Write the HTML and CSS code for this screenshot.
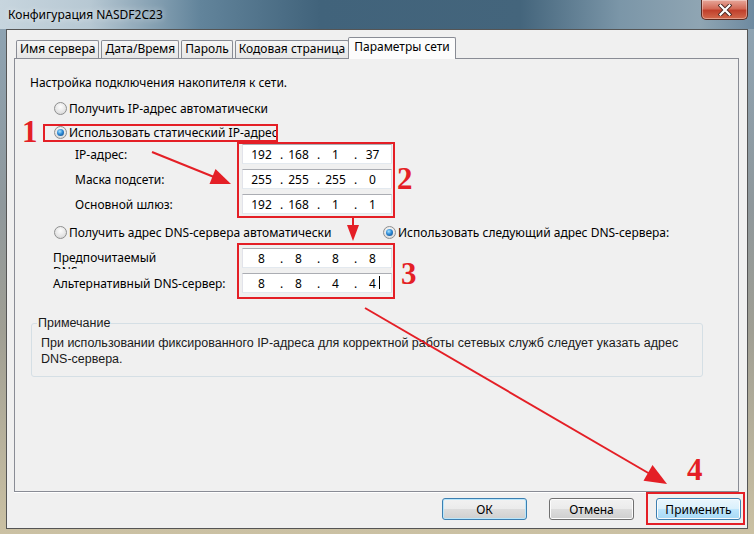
FILE: index.html
```html
<!DOCTYPE html>
<html lang="ru">
<head>
    <meta charset="UTF-8">
    <title>Конфигурация NASDF2C23</title>
    <link rel="stylesheet" href="styles.css">
</head>
<body>
    <div class="window">
        <div class="titlebar">
            <span class="title">Конфигурация NASDF2C23</span>
            <div class="close-btn">
                <svg width="14" height="12" viewBox="0 0 14 12">
                    <path d="M2.5 1.5 L11.5 10.5 M11.5 1.5 L2.5 10.5" stroke="#4a2a24" stroke-width="4" stroke-linecap="square"/>
                    <path d="M2.5 1.5 L11.5 10.5 M11.5 1.5 L2.5 10.5" stroke="#fff" stroke-width="2.2" stroke-linecap="square"/>
                </svg>
            </div>
        </div>
        <div class="frame">
            <div class="client">
                <div class="tabs">
                    <div class="tab">Имя сервера</div>
                    <div class="tab">Дата/Время</div>
                    <div class="tab">Пароль</div>
                    <div class="tab">Кодовая страница</div>
                    <div class="tab active">Параметры сети</div>
                </div>
                <div class="panel">
                    <p class="intro">Настройка подключения накопителя к сети.</p>

                    <div class="option first"><span class="radio"></span>Получить IP-адрес автоматически</div>
                    <div class="option second"><span class="radio checked"></span>Использовать статический IP-адрес</div>

                    <div class="addr-group ip-group">
                        <div class="addr-row">
                            <span class="addr-label">IP-адрес:</span>
                            <div class="ipbox">
                                <span class="oct">192</span><span class="dot">.</span><span class="oct">168</span><span class="dot">.</span><span class="oct">1</span><span class="dot">.</span><span class="oct">37</span>
                            </div>
                        </div>
                        <div class="addr-row">
                            <span class="addr-label">Маска подсети:</span>
                            <div class="ipbox">
                                <span class="oct">255</span><span class="dot">.</span><span class="oct">255</span><span class="dot">.</span><span class="oct">255</span><span class="dot">.</span><span class="oct">0</span>
                            </div>
                        </div>
                        <div class="addr-row">
                            <span class="addr-label">Основной шлюз:</span>
                            <div class="ipbox">
                                <span class="oct">192</span><span class="dot">.</span><span class="oct">168</span><span class="dot">.</span><span class="oct">1</span><span class="dot">.</span><span class="oct">1</span>
                            </div>
                        </div>
                    </div>

                    <div class="dns-choice">
                        <div class="option auto-dns"><span class="radio"></span>Получить адрес DNS-сервера автоматически</div>
                        <div class="option"><span class="radio checked"></span>Использовать следующий адрес DNS-сервера:</div>
                    </div>

                    <div class="addr-group dns-group">
                        <div class="addr-row">
                            <span class="addr-label clipped">Предпочитаемый DNS-сервер:</span>
                            <div class="ipbox">
                                <span class="oct">8</span><span class="dot">.</span><span class="oct">8</span><span class="dot">.</span><span class="oct">8</span><span class="dot">.</span><span class="oct">8</span>
                            </div>
                        </div>
                        <div class="addr-row">
                            <span class="addr-label">Альтернативный DNS-сервер:</span>
                            <div class="ipbox">
                                <span class="oct">8</span><span class="dot">.</span><span class="oct">8</span><span class="dot">.</span><span class="oct">4</span><span class="dot">.</span><span class="oct"><span class="caret">4</span></span>
                            </div>
                        </div>
                    </div>

                    <fieldset class="note">
                        <legend>Примечание</legend>
                        <p>При использовании фиксированного IP-адреса для корректной работы сетевых служб следует указать адрес<br>DNS-сервера.</p>
                    </fieldset>
                </div>
                <div class="buttons">
                    <button class="btn default">ОК</button>
                    <button class="btn">Отмена</button>
                    <button class="btn hot">Применить</button>
                </div>
            </div>
        </div>

        <!-- red marks drawn over the screenshot -->
        <svg class="marks" width="754" height="534" viewBox="0 0 754 534">
            <g fill="none" stroke="#e41f26" stroke-width="2">
                <rect x="44" y="125" width="233" height="16"/>
                <rect x="238" y="143" width="156" height="74"/>
                <rect x="238" y="244" width="156" height="54"/>
                <rect x="647" y="493" width="97" height="31"/>
                <line x1="152" y1="152" x2="214" y2="177"/>
                <line x1="353" y1="218" x2="353" y2="227"/>
                <line x1="365" y1="308" x2="650" y2="474"/>
            </g>
            <g fill="#e41f26">
                <polygon points="231,184 209.5,183.9 215.5,169.1"/>
                <polygon points="347,225 359,225 353,241"/>
                <polygon points="667,484 643.5,480.7 652.5,465.1"/>
            </g>
            <g class="num" fill="#e41f26">
                <text x="22" y="142">1</text>
                <text x="397" y="189">2</text>
                <text x="401" y="284">3</text>
                <text x="687" y="480">4</text>
            </g>
        </svg>
    </div>
</body>
</html>
```

FILE: styles.css
```css
* {
    box-sizing: border-box;
}
body {
    margin: 0;
    font-family: "Noto Sans", sans-serif;
    font-size: 12px;
    color: #000;
}
.window {
    position: relative;
    width: 754px;
    height: 534px;
    display: flex;
    flex-direction: column;
}
.titlebar {
    height: 29px;
    flex: none;
    display: flex;
    align-items: center;
    padding: 0 6px 0 8px;
    background: linear-gradient(to right, #c7d5de 0, #b7c8d3 90px, #62849b 200px, #41637b 320px, #44657c 520px, #7b96a8 620px, #8fa5b3 700px, #6e8aa0 754px);
}
.title {
    text-shadow: 0 0 6px rgba(255, 255, 255, 0.8);
}
.close-btn {
    margin-left: auto;
    align-self: flex-start;
    width: 47px;
    height: 20px;
    display: flex;
    align-items: center;
    justify-content: center;
    border: 1px solid #5a2b22;
    border-top: none;
    border-radius: 0 0 5px 5px;
    background: linear-gradient(#e7a79a, #d36b58 45%, #c0402c 55%, #d26a4d);
    box-shadow: inset 0 0 0 1px rgba(255, 255, 255, 0.35);
}
.frame {
    flex: 1;
    display: flex;
    padding: 0 6px 5px 6px;
    background: linear-gradient(#8ea3b2 0, #8f989c 35%, #a09f94 60%, #cbc1a3 100%);
}
.client {
    flex: 1;
    display: flex;
    flex-direction: column;
    border: 1px solid #555;
    background: #f0f0f0;
    padding: 7px 6px 0 7px;
}
.tabs {
    display: flex;
    align-items: flex-end;
    padding-left: 2px;
    height: 21px;
    flex: none;
}
.tab {
    height: 18px;
    line-height: 16px;
    padding: 0 3px;
    margin-right: 2px;
    border: 1px solid #898c95;
    border-bottom: none;
    border-radius: 2px 2px 0 0;
    background: linear-gradient(#f6f6f6, #e6e6e6);
    white-space: nowrap;
}
.tab.active {
    height: 22px;
    margin-left: -3px;
    margin-bottom: -1px;
    line-height: 18px;
    padding: 0 5px;
    background: #fcfcfc;
    position: relative;
    z-index: 1;
}
.panel {
    flex: 1;
    margin-right: 2px;
    border: 1px solid #898c95;
    background: #f0f0f0;
    box-shadow: 0 1px 0 #fff;
}
.intro {
    margin: 16px 0 0 15px;
    line-height: 16px;
}
.option {
    display: flex;
    align-items: center;
    height: 16px;
    white-space: nowrap;
}
.option.first {
    margin: 9px 0 0 39px;
}
.option.second {
    margin: 8px 0 0 39px;
}
.radio {
    position: relative;
    flex: none;
    width: 13px;
    height: 13px;
    margin-right: 2px;
    border-radius: 50%;
    border: 1px solid #8e8f8f;
    background: radial-gradient(circle at 50% 35%, #fdfdfd, #e4e4e4 60%, #cfcfcf);
}
.radio.checked::after {
    content: "";
    position: absolute;
    left: 2px;
    top: 2px;
    width: 7px;
    height: 7px;
    border-radius: 50%;
    background: radial-gradient(circle at 40% 35%, #a8e4ff, #2d8ad6 45%, #0c3f78);
}
.addr-group.ip-group {
    margin-top: 4px;
}
.addr-group.dns-group {
    margin-top: 8px;
}
.addr-row {
    display: flex;
    align-items: center;
    height: 20px;
}
.addr-row + .addr-row {
    margin-top: 5px;
}
.ip-group .addr-label {
    margin-left: 60px;
    width: 167px;
}
.dns-group .addr-label {
    margin-left: 38px;
    width: 189px;
}
.addr-label.clipped {
    align-self: flex-start;
    height: 21px;
    line-height: 14px;
    padding: 3px 80px 0 0;
    overflow: hidden;
    white-space: normal;
}
.ipbox {
    width: 150px;
    height: 20px;
    display: flex;
    align-items: center;
    background: #fff;
    border: 1px solid;
    border-color: #abadb3 #dbdfe6 #e3e9ef #e2e3ea;
}
.oct {
    flex: 1;
    text-align: center;
}
.dot {
    width: 0;
    white-space: nowrap;
}
.caret {
    position: relative;
}
.caret::after {
    content: "";
    position: absolute;
    left: calc(100% + 3px);
    top: 1px;
    width: 1px;
    height: 13px;
    background: #000;
}
.dns-choice {
    display: flex;
    margin: 10px 0 0 39px;
}
.auto-dns {
    width: 329px;
}
.note {
    margin: 23px 0 0 16px;
    width: 672px;
    padding: 5px 9px 9px 9px;
    border: 1px solid #d5dfe5;
    border-radius: 3px;
    font-family: "Liberation Sans", sans-serif;
    font-size: 12.5px;
    color: #1a1a1a;
}
.note legend {
    margin-left: -4px;
    padding: 0 1px;
    line-height: 14px;
}
.note p {
    margin: 0;
    line-height: 16px;
}
.buttons {
    display: flex;
    justify-content: flex-end;
    gap: 22px;
    margin: 6px 0 8px 0;
    height: 22px;
    flex: none;
}
.btn {
    width: 85px;
    height: 22px;
    padding: 0;
    font-family: "Noto Sans", sans-serif;
    font-size: 12px;
    color: #000;
    border: 1px solid #707070;
    border-radius: 3px;
    background: linear-gradient(#f2f2f2, #ebebeb 50%, #dddddd 50%, #cfcfcf);
    box-shadow: inset 0 0 0 1px #fcfcfc;
}
.btn.default {
    border-color: #3c7fb1;
    box-shadow: inset 0 0 0 1px #b9e6fb;
}
.btn.hot {
    border-color: #3c7fb1;
    background: linear-gradient(#eaf6fd, #d9f0fc 50%, #bee6fd 50%, #a7d9f5);
}
.marks {
    position: absolute;
    left: 0;
    top: 0;
    pointer-events: none;
}
.num text {
    font-family: "Liberation Serif", serif;
    font-weight: bold;
    font-size: 31px;
}
```
